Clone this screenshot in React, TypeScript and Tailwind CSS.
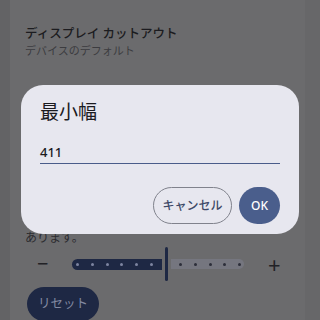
import React from "react";

const font = { fontFamily: '"Noto Sans", "Noto Sans CJK JP", sans-serif' };

function Slider() {
  const active = [0, 1, 2, 3, 4, 5];
  const rest = [0, 1, 2, 3, 4];
  return (
    <div className="flex items-center h-[36px]">
      <span className="w-[47px] pl-[12px] text-[20px] leading-none text-[#222226]">−</span>
      <div className="flex items-center">
        <div className="flex items-center justify-between w-[90px] h-[11px] rounded-l-full bg-[#1e2844] pl-[4px] pr-[9px]">
          {active.map((i) => (
            <span key={i} className="w-[3px] h-[3px] rounded-full bg-[#7d84a0]" />
          ))}
        </div>
        <div className="w-[3px] h-[34px] mx-[3px] rounded-full bg-[#1e2844]" />
        <div className="flex items-center justify-between w-[73px] h-[10px] rounded-r-full bg-[#75767f] pl-[8px] pr-[3px]">
          {rest.map((i) => (
            <span key={i} className="w-[3px] h-[3px] rounded-full bg-[#2c2e3a]" />
          ))}
        </div>
      </div>
      <span className="ml-[24px] text-[22px] leading-none text-[#222226]">+</span>
    </div>
  );
}

export default function App() {
  return (
    <div className="relative w-[320px] h-[320px] overflow-hidden bg-[#6b6b6d]" style={font}>
      <div className="flex h-full">
        <div className="w-[10px] bg-[#636365]" />
        <div className="flex-1 flex flex-col pl-[15px] pt-[25px] [&>*]:shrink-0">
          <div className="text-[12.5px] leading-[18px] font-medium text-[#1c1c20]">ディスプレイ カットアウト</div>
          <div className="text-[11px] leading-[16px] text-[#3c3c40]">デバイスのデフォルト</div>
          <div className="h-[171px]" />
          <div className="text-[12px] leading-[16px] text-[#2c2c30]">あります。</div>
          <Slider />
          <div className="mt-[5px] ml-[2px]">
            <button className="h-[34px] px-[11px] rounded-full bg-[#1e2844] text-[12.5px] text-[#838aa2]">
              リセット
            </button>
          </div>
        </div>
        <div className="w-[15px] bg-[#676769]" />
      </div>

      <div className="absolute left-[21px] top-[85px] w-[278px] h-[149px] rounded-[22px] bg-[#e7e7ef] px-[19px] pt-[14px] pb-[10px] flex flex-col">
        <div className="text-[19px] leading-[26px] text-[#1b1b1f]">最小幅</div>
        <div className="mt-[14px] border-b-[1.5px] border-[#4a5c8a]">
          <span className="text-[13px] leading-[18px] font-medium text-[#1b1b1f]">411</span>
        </div>
        <div className="mt-auto flex justify-end gap-[7px]">
          <button className="h-[37px] w-[79px] rounded-full border border-[#80828c] text-[12px] font-medium text-[#3e4a68]">
            キャンセル
          </button>
          <button className="h-[37px] w-[41px] rounded-full bg-[#4a5e8c] text-[12px] font-medium text-white">
            OK
          </button>
        </div>
      </div>
    </div>
  );
}
